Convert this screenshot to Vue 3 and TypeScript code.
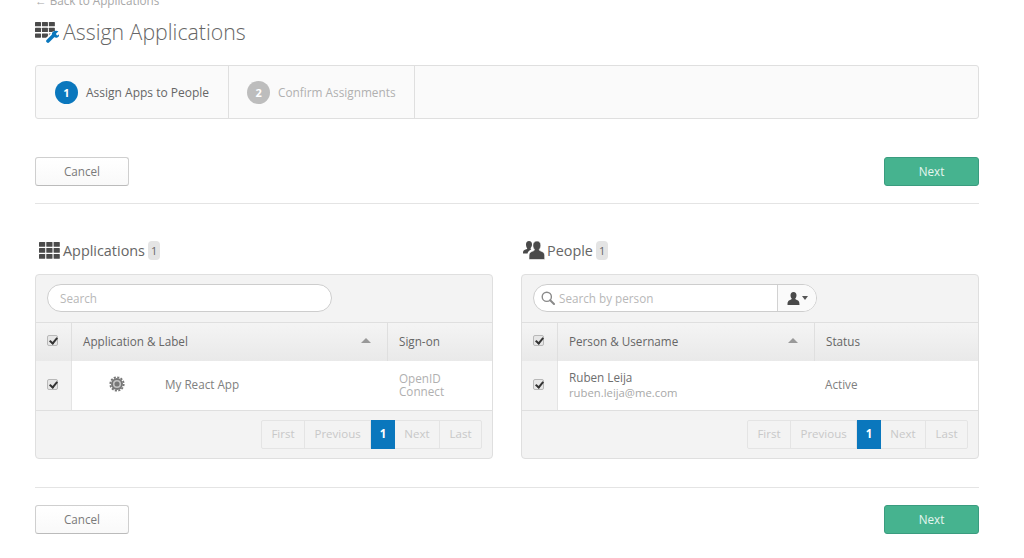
<script setup lang="ts">
interface Pager { label: string; current?: boolean }
const pager: Pager[] = [
  { label: 'First' },
  { label: 'Previous' },
  { label: '1', current: true },
  { label: 'Next' },
  { label: 'Last' },
]
const gridCells: number[][] = []
for (let r = 0; r < 3; r++) for (let c = 0; c < 3; c++) gridCells.push([c * 7.3, r * 6])
</script>

<template>
  <div class="page">
    <div class="back">← Back to Applications</div>
    <div class="title">
      <svg class="title-icon" width="24" height="21" viewBox="0 0 24 21">
        <rect v-for="(p, i) in gridCells" :key="i" :x="p[0] * 0.95" :y="p[1] * 0.95" width="6" height="4.300" rx="0.6" fill="#4a4a4a" />
        <path d="M13 19l6-6" stroke="#fff" stroke-width="7" stroke-linecap="round" />
        <path d="M13 19l5.500-5.500" stroke="#0a77bd" stroke-width="3.600" stroke-linecap="round" />
        <path d="M23.500 9.300l-2.400 2.300.3 1.500 1.500.3 1.500-1.500c.2 2.600-2 4.400-4.500 3.700l-3-3c-.6-2.900 3.400-5 6.600-3.300z" fill="#0a77bd" />
      </svg>
      <h1>Assign Applications</h1>
    </div>

    <div class="steps">
      <div class="step active"><span class="num">1</span><span>Assign Apps to People</span></div>
      <div class="step"><span class="num">2</span><span>Confirm Assignments</span></div>
    </div>

    <div class="actions first">
      <button class="btn">Cancel</button>
      <button class="btn primary">Next</button>
    </div>
    <div class="rule"></div>

    <div class="columns">
      <section class="col">
        <div class="heading">
          <svg width="21" height="17" viewBox="0 0 21 17">
            <rect v-for="(p, i) in gridCells" :key="i" :x="p[0]" :y="p[1]" width="6.200" height="4.800" rx="0.6" fill="#4a4a4a" />
          </svg>
          <span>Applications</span><em class="count">1</em>
        </div>
        <div class="panel">
          <div class="search-row">
            <input class="pill" type="text" placeholder="Search" />
          </div>
          <div class="row head apps">
            <div class="check"><i class="box"></i></div>
            <div class="th sort"><span>Application &amp; Label</span><b class="arrow"></b></div>
            <div class="th">Sign-on</div>
          </div>
          <div class="row body apps">
            <div class="check"><i class="box"></i></div>
            <div class="app-cell">
              <svg class="gear" width="16" height="16" viewBox="0 0 16 16">
                <circle cx="8" cy="8" r="6.700" fill="none" stroke="#777" stroke-width="1.800" stroke-dasharray="2.100 1.410" />
                <circle cx="8" cy="8" r="6" fill="#777" />
                <circle cx="8" cy="8" r="4.100" fill="#c4c4c4" />
                <circle cx="8" cy="8" r="2.500" fill="#777" />
              </svg>
              <span>My React App</span>
            </div>
            <div class="sign">OpenID<br />Connect</div>
          </div>
          <div class="foot">
            <div class="pager">
              <span v-for="p in pager" :key="p.label" class="page-item" :class="{ current: p.current }">{{ p.label }}</span>
            </div>
          </div>
        </div>
      </section>

      <section class="col">
        <div class="heading">
          <svg width="22" height="20" viewBox="0 0 22 20">
            <path fill="#4a4a4a" d="M6 1c2 0 3 1.500 3 3.500 0 1.500-.6 2.700-1.300 3.500-.3.600 0 1.200.7 1.500-1.700.7-3.400 1.700-3.900 4H0c0-2 .2-3 1.500-3.500C3 9.400 4 9.200 4.300 8.500 3.500 7.500 3 6 3 4.500 3 2.500 4 1 6 1z" />
            <path fill="#4a4a4a" stroke="#fff" stroke-width="0.600" d="M14 1c2.500 0 3.800 1.800 3.800 4.200 0 1.800-.7 3.300-1.500 4.300-.3.800.5 1.200 2 1.800 2.400.9 3.400 1.700 3.400 5.700v2.500H6v-2.500c0-4 1-4.800 3.400-5.700 1.500-.6 2.300-1 2-1.800-.8-1-1.500-2.500-1.500-4.300C9.900 2.800 11.500 1 14 1z" />
          </svg>
          <span>People</span><em class="count">1</em>
        </div>
        <div class="panel">
          <div class="search-row">
            <div class="person-search">
              <svg class="mag" width="14" height="14" viewBox="0 0 14 14">
                <circle cx="5.800" cy="5.800" r="4.600" fill="none" stroke="#8a8a8a" stroke-width="1.400" />
                <path d="M9.200 9.200L13 13" stroke="#8a8a8a" stroke-width="2" stroke-linecap="round" />
              </svg>
              <input type="text" placeholder="Search by person" />
              <div class="filter">
                <svg width="13" height="13" viewBox="0 0 13 13">
                  <path fill="#4a4a4a" d="M6.500 0C8.500 0 9.500 1.400 9.500 3.300c0 1.400-.6 2.600-1.200 3.300-.2.600.4 1 1.500 1.400 2 .8 2.700 1.300 2.700 5H.500c0-3.700.7-4.200 2.700-5 1.100-.4 1.700-.8 1.500-1.400C4.100 5.900 3.500 4.700 3.500 3.300 3.500 1.400 4.500 0 6.500 0z" />
                </svg>
                <b class="caret"></b>
              </div>
            </div>
          </div>
          <div class="row head people">
            <div class="check"><i class="box"></i></div>
            <div class="th sort"><span>Person &amp; Username</span><b class="arrow"></b></div>
            <div class="th">Status</div>
          </div>
          <div class="row body people">
            <div class="check"><i class="box"></i></div>
            <div class="person">
              <div class="name">Ruben Leija</div>
              <div class="mail">ruben.leija@me.com</div>
            </div>
            <div class="status">Active</div>
          </div>
          <div class="foot">
            <div class="pager">
              <span v-for="p in pager" :key="p.label" class="page-item" :class="{ current: p.current }">{{ p.label }}</span>
            </div>
          </div>
        </div>
      </section>
    </div>

    <div class="rule second"></div>
    <div class="actions last">
      <button class="btn">Cancel</button>
      <button class="btn primary">Next</button>
    </div>
  </div>
</template>

<style>
html, body { margin: 0; background: #fff; overflow: hidden; }
</style>

<style scoped>
.page {
  box-sizing: border-box;
  width: 1024px;
  height: 558px;
  padding: 0 45px 0 35px;
  overflow: hidden;
  font-family: "Open Sans", "Liberation Sans", sans-serif;
  font-size: 11.700px;
  color: #6a6a6a;
}
.back {
  height: 12px;
  margin-top: -6px;
  line-height: 12px;
  font-size: 11.700px;
  color: #a8a8a8;
}
.title {
  display: flex;
  align-items: center;
  gap: 4px;
  height: 30px;
  margin-top: 11px;
}
.title-icon { flex: none; }
h1 {
  margin: 0;
  font-size: 21.300px;
  font-weight: 300;
  color: #666;
  line-height: 30px;
}
.steps {
  display: flex;
  box-sizing: border-box;
  height: 54px;
  margin-top: 18px;
  background: #fafafa;
  border: 1px solid #dfdfdf;
  border-radius: 3px;
}
.step {
  display: flex;
  align-items: center;
  gap: 8px;
  padding: 0 18px;
  border-right: 1px solid #dfdfdf;
  font-size: 11.800px;
  font-weight: 500;
  color: #b0b0b0;
}
.step.active {
  padding: 0 19px;
  font-size: 12px;
  color: #666;
}
.num {
  width: 23px;
  height: 23px;
  border-radius: 50%;
  background: #bdbdbd;
  color: #fff;
  font-size: 11px;
  font-weight: 700;
  line-height: 23px;
  text-align: center;
}
.step.active .num { background: #0a77bd; }
.actions {
  display: flex;
  justify-content: space-between;
}
.actions.first { margin-top: 38px; }
.actions.last { margin-top: 17px; }
.btn {
  box-sizing: border-box;
  width: 94px;
  height: 29px;
  padding: 0 0 2px;
  border: 1px solid #cfcfcf;
  border-bottom-color: #bbb;
  border-radius: 3px;
  background: linear-gradient(#fff, #f9f9f9);
  font: inherit;
  color: #7a7a7a;
}
.btn.primary {
  width: 95px;
  border-color: #3a9c7f;
  background: #46b38f;
  color: #e6f6f0;
  font-weight: 500;
}
.rule { height: 1px; margin-top: 17px; background: #e4e4e4; }
.rule.second { margin-top: 28px; }
.columns {
  display: grid;
  grid-template-columns: 458px 458px;
  gap: 28px;
  margin-top: 35px;
}
.heading {
  display: flex;
  align-items: center;
  height: 22px;
  margin-bottom: 13px;
  padding-left: 4px;
  font-size: 14.400px;
  color: #666;
}
.col:last-child .heading { padding-left: 2px; }
.heading svg { margin-right: 3px; }
.col:last-child .heading svg { margin-right: 2px; }
.count {
  margin-left: 3px;
  padding: 0 3px;
  height: 19px;
  line-height: 19px;
  border-radius: 4px;
  background: #e4e4e4;
  font-size: 11px;
  font-style: normal;
  color: #666;
}
.panel {
  box-sizing: border-box;
  height: 185px;
  border: 1px solid #dfdfdf;
  border-radius: 4px;
  background: #f3f3f3;
  overflow: hidden;
}
.search-row {
  box-sizing: border-box;
  display: flex;
  height: 48px;
  padding: 9px 11px;
  border-bottom: 1px solid #dfdfdf;
}
.pill {
  box-sizing: border-box;
  width: 285px;
  height: 28px;
  padding: 0 12px;
  border: 1px solid #cdcdcd;
  border-radius: 14px;
  background: #fff;
  font: inherit;
  outline: none;
}
input::placeholder { color: #b8b8b8; opacity: 1; }
.person-search {
  display: flex;
  align-items: center;
  box-sizing: border-box;
  width: 284px;
  height: 28px;
  border: 1px solid #cdcdcd;
  border-radius: 14px;
  background: #fff;
  overflow: hidden;
}
.mag { flex: none; margin-left: 7px; }
.person-search input {
  flex: 1;
  min-width: 0;
  box-sizing: border-box;
  height: 26px;
  padding: 0 0 0 4px;
  border: 0;
  background: transparent;
  font: inherit;
  outline: none;
}
.filter {
  display: flex;
  align-items: center;
  justify-content: center;
  gap: 2px;
  flex: none;
  width: 38px;
  height: 26px;
  border-left: 1px solid #d2d2d2;
  background: #fafafa;
}
.caret {
  border-left: 3px solid transparent;
  border-right: 3px solid transparent;
  border-top: 4px solid #555;
}
.row { display: grid; }
.row.apps { grid-template-columns: 36px 316px 1fr; }
.row.people { grid-template-columns: 36px 257px 1fr; }
.row.head {
  height: 38px;
  background: linear-gradient(#f4f4f4, #e9e9e9);
}
.row.head > div {
  display: flex;
  align-items: center;
  padding-bottom: 3px;
  box-sizing: border-box;
}
.row.head .check, .row.head .sort { border-right: 1px solid #dfdfdf; }
.th { padding: 0 11px; color: #666; }
.sort { justify-content: space-between; padding-right: 16px; }
.arrow {
  border-left: 5px solid transparent;
  border-right: 5px solid transparent;
  border-bottom: 5px solid #999;
}
.check {
  display: flex;
  align-items: center;
  justify-content: center;
  padding-right: 2px;
}
.box {
  position: relative;
  box-sizing: border-box;
  width: 11px;
  height: 11px;
  border: 1px solid #b8b8b8;
  border-radius: 2px;
  background: #e6e6e6;
}
.box::after {
  content: "";
  position: absolute;
  left: 3px;
  top: 0;
  width: 3px;
  height: 6px;
  border: solid #333;
  border-width: 0 2px 2px 0;
  transform: rotate(40deg);
}
.row.body {
  height: 50px;
  background: #fff;
  border-bottom: 1px solid #dfdfdf;
  box-sizing: border-box;
}
.row.body .check { background: #f3f3f3; border-right: 1px solid #e4e4e4; padding-bottom: 2px; }
.app-cell {
  display: flex;
  align-items: center;
  padding-bottom: 3px;
  color: #808080;
}
.gear { margin-left: 37px; margin-right: 40px; margin-top: -1px; }
.sign {
  align-self: center;
  padding-left: 11px;
  padding-bottom: 1px;
  line-height: 13px;
  color: #b0b0b0;
}
.person {
  align-self: center;
  padding-left: 11px;
  padding-bottom: 1px;
  line-height: 15px;
}
.name { color: #6e6e6e; }
.mail { color: #a8a8a8; font-size: 11.300px; }
.status {
  align-self: center;
  padding: 0 0 3px 10px;
  color: #808080;
}
.foot {
  display: flex;
  justify-content: flex-end;
  padding: 9px 10px;
}
.pager {
  display: flex;
  box-sizing: border-box;
  height: 29px;
  border: 1px solid #e4e4e4;
  border-radius: 2px;
  font-size: 11.500px;
}
.page-item {
  padding: 0 9.500px;
  line-height: 26px;
  color: #c8c8c8;
  border-right: 1px solid #e4e4e4;
}
.page-item:last-child { border-right: 0; }
.page-item.current {
  margin: -1px 0;
  padding: 0 8.500px;
  height: 29px;
  line-height: 28px;
  background: #0a77bd;
  color: #fff;
  font-weight: 700;
  border-right: 0;
}
</style>
